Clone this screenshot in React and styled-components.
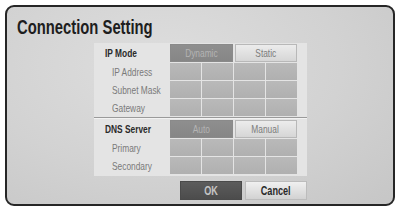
import React from "react";
import styled, { createGlobalStyle } from "styled-components";

const Global = createGlobalStyle`
  html, body {
    margin: 0;
    padding: 0;
    background: #ffffff;
  }
  * {
    box-sizing: border-box;
  }
`;

const Frame = styled.div`
  margin: 5px;
  width: 390px;
  height: 201px;
  border: 2px solid #262626;
  border-radius: 9px;
  background: radial-gradient(ellipse at 40% 30%, #dedede 0%, #d2d2d2 55%, #c6c6c6 100%);
  display: flex;
  flex-direction: column;
  align-items: center;
  font-family: "Liberation Sans", Arial, sans-serif;
`;

// the TV menu font is a condensed face; squeeze Liberation Sans to match
const Narrow = styled.span`
  display: inline-block;
  white-space: nowrap;
  transform: scaleX(${(p) => p.$s || 0.76});
  transform-origin: ${(p) => p.$origin || "center"};
`;

const Title = styled.h1`
  align-self: flex-start;
  margin: 8px 0 0 10px;
  font-size: 20px;
  line-height: 24px;
  font-weight: bold;
  color: #1e1e1e;
  height: 24px;
`;

const Panel = styled.div`
  margin-top: 4px;
  width: 213px;
  background: #e4e4e4;
  padding: 1px 11px 2px 0;
  display: flex;
  flex-direction: column;
`;

const Row = styled.div`
  display: grid;
  grid-template-columns: 75px repeat(4, 31px);
  column-gap: 1px;
  height: ${(p) => p.$h || 17}px;
  margin-top: ${(p) => p.$gap || 0}px;
`;

const Label = styled.div`
  display: flex;
  align-items: center;
  padding-left: ${(p) => (p.$main ? 11 : 18)}px;
  font-size: 11px;
  font-weight: ${(p) => (p.$main ? "bold" : "normal")};
  color: ${(p) => (p.$main ? "#2a2a2a" : "#7a7a7a")};
`;

const Cell = styled.div`
  background: linear-gradient(#b9b9b9, #b0b0b0);
`;

const Choice = styled.div`
  grid-column: span 2;
  display: flex;
  align-items: center;
  justify-content: center;
  font-size: 11px;
  color: ${(p) => (p.$active ? "#b4b4b4" : "#7c7c7c")};
  background: ${(p) =>
    p.$active
      ? "linear-gradient(#8e8e8e, #868686)"
      : "linear-gradient(#ececec, #d6d6d6)"};
  border: 1px solid ${(p) => (p.$active ? "#8a8a8a" : "#b8b8b8")};
  margin-left: ${(p) => (p.$active ? 0 : 1)}px;
`;

const Divider = styled.div`
  height: 2px;
  margin: 1px -11px 1px 0;
  border-top: 1px solid #9a9a9a;
  border-bottom: 1px solid #f2f2f2;
`;

const Buttons = styled.div`
  margin-top: 5px;
  margin-left: 86px;
  display: flex;
  gap: 3px;
`;

const Button = styled.div`
  width: 62px;
  height: 19px;
  display: flex;
  align-items: center;
  justify-content: center;
  font-size: 12px;
  font-weight: bold;
  color: ${(p) => (p.$dark ? "#c4c4c4" : "#2a2a2a")};
  background: ${(p) =>
    p.$dark
      ? "linear-gradient(#5c5c5c, #4c4c4c)"
      : "linear-gradient(#f0f0f0, #d2d2d2)"};
  border: 1px solid ${(p) => (p.$dark ? "#4a4a4a" : "#bcbcbc")};
`;

const Field = ({ label }) => (
  <Row $gap={1}>
    <Label>
      <Narrow $origin="left">{label}</Narrow>
    </Label>
    <Cell />
    <Cell />
    <Cell />
    <Cell />
  </Row>
);

const Section = ({ title, options, fields }) => (
  <>
    <Row $h={18}>
      <Label $main>
        <Narrow $origin="left">{title}</Narrow>
      </Label>
      <Choice $active>
        <Narrow>{options[0]}</Narrow>
      </Choice>
      <Choice>
        <Narrow>{options[1]}</Narrow>
      </Choice>
    </Row>
    {fields.map((f) => (
      <Field key={f} label={f} />
    ))}
  </>
);

export default function App() {
  return (
    <>
      <Global />
      <Frame>
        <Title>
          <Narrow $s={0.74} $origin="left">
            Connection Setting
          </Narrow>
        </Title>
        <Panel>
          <Section
            title="IP Mode"
            options={["Dynamic", "Static"]}
            fields={["IP Address", "Subnet Mask", "Gateway"]}
          />
          <Divider />
          <Section
            title="DNS Server"
            options={["Auto", "Manual"]}
            fields={["Primary", "Secondary"]}
          />
        </Panel>
        <Buttons>
          <Button $dark>
            <Narrow>OK</Narrow>
          </Button>
          <Button>
            <Narrow>Cancel</Narrow>
          </Button>
        </Buttons>
      </Frame>
    </>
  );
}
